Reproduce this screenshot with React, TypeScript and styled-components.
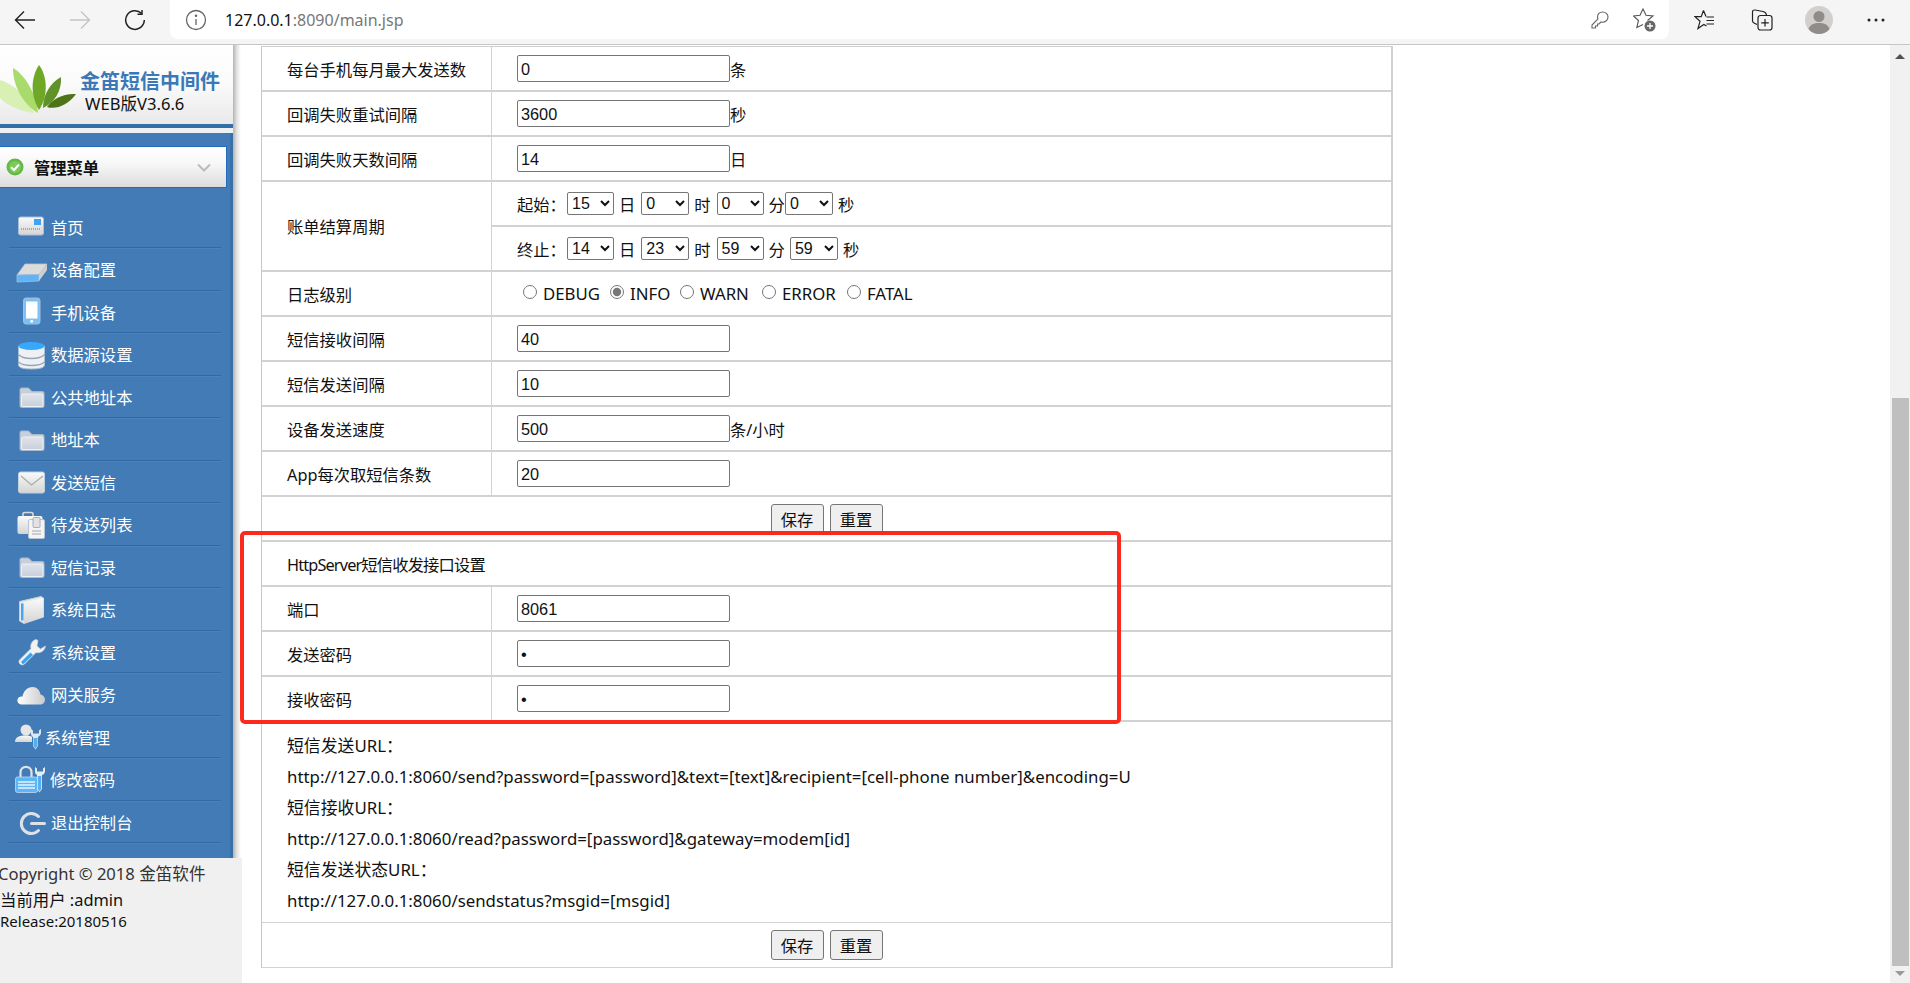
import React from "react";
import styled, { createGlobalStyle } from "styled-components";

const textFont = `"Noto Sans", "Noto Sans CJK SC", sans-serif`;
const fieldFont = `"Liberation Sans", "Noto Sans CJK SC", sans-serif`;

const GlobalStyle = createGlobalStyle`
  html, body {
    margin: 0;
    padding: 0;
    height: 100%;
    overflow: hidden;
    background: #fff;
  }
  * { box-sizing: border-box; }
`;

const Frame = styled.div`
  position: relative;
  display: flex;
  flex-direction: column;
  width: 1910px;
  height: 983px;
  overflow: hidden;
  font-family: ${textFont};
  font-size: 16.3px;
  color: #111;
`;

/* browser chrome */
const Toolbar = styled.header`
  display: flex;
  align-items: flex-start;
  flex: 0 0 45px;
  padding-right: 6px;
  background: #f5f5f5;
  border-bottom: 1px solid #c6c6c6;
`;
const NavSlot = styled.div<{ $w: number }>`
  display: flex;
  align-items: center;
  justify-content: center;
  width: ${p => p.$w}px;
  height: 40px;
  margin-right: ${p => (p.$w === 50 ? 5 : 0)}px;
`;
const UrlBar = styled.div`
  display: flex;
  align-items: center;
  flex: 1;
  height: 39px;
  margin: 0 7px 0 5px;
  padding: 0 10px 0 15px;
  background: #fff;
  border-radius: 0 0 8px 8px;
`;
const UrlText = styled.div`
  margin-left: 18px;
  flex: 1;
  font-size: 16px;
  color: #777;
  span { color: #111; }
`;
const UrlAction = styled.div<{ $gap: number }>`
  display: flex;
  margin-right: ${p => p.$gap}px;
`;

/* page */
const Page = styled.div`
  display: flex;
  flex: 1;
  min-height: 0;
`;
const Sidebar = styled.aside`
  display: flex;
  flex-direction: column;
  flex: 0 0 242px;
`;
const SideTop = styled.div`
  flex: 0 0 813px;
  padding-right: 9px;
  background: linear-gradient(90deg, #b4b4b4 233px, #e4e4e4 237px, #fff 241px);
`;
const Brand = styled.div`
  display: flex;
  height: 79px;
  background: linear-gradient(180deg, #fff 0%, #fafafa 50%, #e9e9e9 100%);
`;
const BrandText = styled.div`
  padding-top: 23px;
`;
const BrandTitle = styled.div`
  font-size: 20px;
  line-height: 27px;
  font-weight: 700;
  color: #3a79b7;
  white-space: nowrap;
`;
const BrandVersion = styled.div`
  margin: -2px 0 0 5px;
  font-size: 16.6px;
  line-height: 22px;
  color: #111;
`;
const BrandBar = styled.div`
  height: 9px;
  border-top: 4px solid #336fa7;
  background: #eef1f4;
`;
const MenuPanel = styled.nav`
  height: 725px;
  padding-top: 13px;
  background: #427bb6;
  border-right: 3px solid #3a70a8;
`;
const MenuHead = styled.div`
  display: flex;
  align-items: center;
  width: 227px;
  height: 42px;
  padding: 0 15px 0 6px;
  border: 1px solid #1f6cc0;
  border-left: 0;
  background: linear-gradient(180deg, #fff 0%, #f6f6f6 45%, #dcdcdc 100%);
`;
const MenuHeadTitle = styled.div`
  flex: 1;
  margin-left: 10px;
  font-weight: 700;
  color: #111;
`;
const MenuList = styled.ul`
  list-style: none;
  margin: 17.5px 0 0 9px;
  padding: 0;
  width: 212px;
`;
const MenuItem = styled.li`
  display: flex;
  align-items: center;
  height: 42.5px;
  border-bottom: 1px solid #2f6aa6;
  box-shadow: 0 1px 0 #4a82bb;
  color: #fff;
  white-space: nowrap;
`;
const MenuLabel = styled.span<{ $shift?: number }>`
  margin-left: ${p => p.$shift || 0}px;
  padding-top: 1px;
`;
const SideFooter = styled.div`
  flex: 1;
  padding-top: 5px;
  overflow: hidden;
  background: #f0f0f0;
  white-space: nowrap;
`;
const FootLine = styled.div<{ $size: number; $h: number; $x: number; $color: string }>`
  margin-left: ${p => p.$x}px;
  font-size: ${p => p.$size}px;
  line-height: ${p => p.$h}px;
  color: ${p => p.$color};
`;

const Main = styled.main`
  flex: 1;
  padding: 1px 0 0 19px;
  overflow: hidden;
`;
const Table = styled.table`
  width: 1132px;
  table-layout: fixed;
  border-collapse: separate;
  border-spacing: 0;
  border-top: 1px solid #d0d0d0;
  border-left: 1px solid #c8c8c8;
  border-right: 2px solid #d0d0d0;
`;
const Cell = styled.td<{ $h?: number; $thin?: boolean }>`
  height: ${p => p.$h || 45}px;
  padding: 0 0 0 25px;
  border-bottom: ${p => (p.$thin ? 1.5 : 2)}px solid #d2d2d2;
  vertical-align: middle;
  white-space: nowrap;
`;
const LabelCell = styled(Cell)`
  width: 230px;
  border-right: 1px solid #d2d2d2;
`;
const CenterCell = styled(Cell)`
  padding: 0;
  text-align: center;
`;
const SectionTitle = styled(Cell)`
  letter-spacing: -0.85px;
`;
const TextField = styled.input`
  width: 213px;
  height: 27px;
  margin: 0;
  padding: 2px 3px 0;
  border: 1px solid #767676;
  border-radius: 2px;
  font-family: ${fieldFont};
  font-size: 16.3px;
  color: #111;
  vertical-align: middle;
`;
const Suffix = styled.span`
  vertical-align: middle;
`;
const SelectLine = styled.div`
  display: flex;
  align-items: center;
`;
const SelectLabel = styled.span`
  width: 50px;
`;
const Picker = styled.select<{ $w: number }>`
  width: ${p => p.$w}px;
  height: 23px;
  padding: 0;
  border: 1px solid #767676;
  border-radius: 2px;
  background: #fff;
  font-family: ${fieldFont};
  font-size: 16px;
  color: #111;
`;
const Unit = styled.span<{ $r: number }>`
  margin: 0 ${p => p.$r}px 0 5px;
`;
const RadioLine = styled.div`
  display: flex;
  align-items: center;
  padding-left: 6px;
`;
const RadioOption = styled.label<{ $w: number }>`
  display: flex;
  align-items: center;
  width: ${p => p.$w}px;
  font-size: 16.8px;
  input {
    width: 14px;
    height: 14px;
    margin: -3px 6px 0 0;
    accent-color: #777;
  }
`;
const ActionButton = styled.button`
  width: 53px;
  height: 30px;
  margin: 0 3px;
  padding: 0;
  border: 1px solid #767676;
  border-radius: 3px;
  background: #efefef;
  font-family: ${textFont};
  font-size: 16.3px;
  color: #111;
`;
const UrlLines = styled.div`
  padding-top: 2px;
  font-size: 16.85px;
  line-height: 31px;
`;
const Highlight = styled.div`
  position: absolute;
  left: 240px;
  top: 531px;
  width: 881px;
  height: 193px;
  border: 4px solid #fb2a1c;
  border-radius: 5px;
  pointer-events: none;
`;

const ScrollTrack = styled.div`
  display: flex;
  flex-direction: column;
  align-items: center;
  flex: 0 0 21px;
  background: #f1f1f1;
  border-left: 1px solid #fff;
`;
const ScrollArrow = styled.div<{ $up?: boolean }>`
  flex: 0 0 ${p => (p.$up ? 17 : 12)}px;
  margin-top: ${p => (p.$up ? 9 : 5)}px;
  width: 0;
  border-left: 5px solid transparent;
  border-right: 5px solid transparent;
  ${p => (p.$up ? "border-bottom: 5px solid #505050; flex-basis: 5px;" : "border-top: 5px solid #9a9a9a; flex-basis: 5px; margin-bottom: 7px;")}
`;
const ScrollGap = styled.div`
  flex: 1;
`;
const ScrollThumb = styled.div`
  width: 17px;
  height: 568px;
  background: #bfbfbf;
`;

/* sidebar icons: viewBox x runs as the page x, y is centred on the row */
const IconBox = styled.svg`
  flex: 0 0 42px;
  width: 42px;
  height: 32px;
`;
const Icon = ({ children }: { children: React.ReactNode }) => (
  <IconBox viewBox="9 0 42 32">{children}</IconBox>
);
const edge = "#a9bfd6";
const SideDefs = () => (
  <svg width="0" height="0" style={{ position: "absolute" }}>
    <defs>
      <linearGradient id="sg" x1="0" y1="0" x2="0" y2="1">
        <stop offset="0" stopColor="#fafafa" />
        <stop offset="1" stopColor="#d4d4d4" />
      </linearGradient>
      <linearGradient id="sb" x1="0" y1="0" x2="0" y2="1">
        <stop offset="0" stopColor="#dfe3ea" />
        <stop offset="1" stopColor="#c9d0db" />
      </linearGradient>
      <linearGradient id="cl" x1="0" y1="0" x2="1" y2="0">
        <stop offset="0" stopColor="#fff" />
        <stop offset="1" stopColor="#c9c9c9" />
      </linearGradient>
    </defs>
  </svg>
);
const FolderShape = () => (
  <>
    <path d="M20 26V9.5Q20 8 21.5 8H28.5L32 11.5H42.5Q44 11.5 44 13V26Q44 27.5 42.5 27.5H21.5Q20 27.5 20 26Z" fill="#c6cfda" stroke="#a9b9ca" strokeWidth="1" />
    <rect x="21.5" y="14" width="21.5" height="12.5" rx="1.5" fill="url(#sb)" stroke="#eef1f5" strokeWidth="1" />
  </>
);
const icons: Record<string, React.ReactNode> = {
  home: (
    <>
      <rect x="18.5" y="7" width="25" height="18" rx="2" fill="url(#sg)" stroke={edge} />
      <rect x="34" y="9" width="7" height="6" fill="#3ea3f4" />
      <path d="M21 19H41" stroke="#a8a8a8" strokeWidth="2" strokeDasharray="1 1" />
    </>
  ),
  device: (
    <>
      <path d="M25 11H47L39 21.5L17 22Z" fill="#dcdcdc" stroke="#b9c4d0" strokeWidth=".8" />
      <path d="M17 22L39 21.5V28L17 29Z" fill="#5fb3f6" stroke="#a9bfd6" strokeWidth=".8" />
      <path d="M39 21.5L47 11V17L39 28Z" fill="#cfcfcf" />
    </>
  ),
  phone: (
    <>
      <rect x="23.5" y="3" width="16.5" height="26" rx="2.5" fill="#7cc0f4" stroke={edge} />
      <rect x="26" y="6.5" width="11.5" height="17" fill="#fff" />
      <circle cx="31.7" cy="26.3" r="1.4" fill="#fff" />
    </>
  ),
  db: (
    <>
      <path d="M18.5 8V27Q18.5 31 31.5 31T44.5 27V8Z" fill="#eef0f3" stroke={edge} />
      <ellipse cx="31.5" cy="8" rx="13" ry="4" fill="#37a8fb" />
      <path d="M18.5 16.5Q22 20.5 31.5 20.5T44.5 16.5M18.5 24Q22 27.5 31.5 27.5T44.5 24" fill="none" stroke="#9aa6b4" strokeWidth="1.3" />
    </>
  ),
  folder: <FolderShape />,
  mail: (
    <>
      <rect x="18.5" y="7" width="26" height="21" rx="2" fill="url(#sg)" stroke="#c2cfdc" />
      <path d="M21 11L31.5 20L43 11" fill="none" stroke="#acacac" strokeWidth="1.3" />
    </>
  ),
  queue: (
    <>
      <path d="M23 8V6Q23 4.5 25 4.5H31Q33 4.5 33 6V8" fill="none" stroke="#d9d9d9" strokeWidth="1.6" />
      <rect x="17.5" y="8" width="25" height="18" rx="2" fill="url(#sg)" />
      <rect x="28.5" y="11.5" width="16" height="19" rx="1.5" fill="#f4f4f4" stroke="#b9c4d0" />
      <rect x="33" y="9.5" width="7" height="10" rx="1" fill="#e2e2e2" stroke="#a0a8b2" strokeWidth=".9" />
      <path d="M32 23H41M32 26H41" stroke="#a0a8b2" />
    </>
  ),
  book: (
    <>
      <path d="M19.5 8.5L41 3.5L43.5 5V24L24 30.5L19.5 28Z" fill="#eaeaea" stroke="#c4cfdb" />
      <path d="M24 9.5L43.5 5V24L24 30.5Z" fill="url(#sg)" />
      <path d="M21 10.5H23.5V27.5H21Z" fill="#46a6f2" />
    </>
  ),
  wrench: (
    <>
      <path d="M36 4.5C32 5.5 30 9.5 31 13.5L19.5 25C18.5 26.5 19 28 20 29C21 30 23 30.5 24.5 29L36 17.5C40 18.5 44.5 16.5 45.5 11L40.5 14L37 11L38 5.5Z" fill="#f2f2f2" stroke="#c9d3de" strokeWidth=".7" />
      <path d="M21 27L30.5 17.5L33 20L23 29.5Z" fill="#39a2f2" />
    </>
  ),
  cloud: <path d="M22 26.5C18.5 26.5 17 24 17.5 21.5C18 19 20.5 18 22.5 18.5C23.5 13 27.5 9 32.5 9C37 9 40 12.5 40.5 16.5C43.5 17 45 19.5 45 21.5C45 24.5 43 26.5 40 26.5Z" fill="url(#cl)" />,
  admin: (
    <>
      <circle cx="26" cy="10" r="5.5" fill="#e6e6e6" />
      <path d="M15 22C15 17 19 15.5 26 15.5C29 15.5 31 16 32 17V22Z" fill="url(#sg)" />
      <path d="M31 9V14Q31 16 33 17V26L35.5 29.5L38 26V17Q41 15.5 41 13V9L39 10.5V13.5H33V10.5Z" fill="#dfe8f1" />
      <path d="M33.5 18H37.5V26L35.5 28.5L33.5 26Z" fill="#58aef2" />
    </>
  ),
  lock: (
    <>
      <path d="M20.5 14V9.5C20.5 6 23 3.8 26 3.8C29 3.8 31.5 6 31.5 9.5V14" fill="none" stroke="#dfe3e8" strokeWidth="2.2" />
      <rect x="15.5" y="14" width="22" height="15.5" rx="2" fill="#5cb7fa" stroke="#c4d9ec" strokeWidth=".8" />
      <path d="M18 19H35M18 22H35M18 25H35" stroke="#e8f4fd" strokeWidth="1.5" />
      <path d="M35 4V9Q35 11 37 12V26L39.5 29.5L42 26V12Q45 11 45 8V4L43 5.5V8.5H37V5.5Z" fill="#e4ebf2" />
      <path d="M37.8 13H41.2V26L39.5 28.5L37.8 26Z" fill="#58aef2" />
    </>
  ),
  logout: (
    <path d="M38.5 11.5A10 10 0 1 0 38.5 25.5M31.5 18.5H44.5" fill="none" stroke="#dde2e8" strokeWidth="3" strokeLinecap="round" />
  ),
};

const LeafLogo = () => (
  <svg width="80" height="79" viewBox="0 0 80 79">
    <path d="M-2 35C10 36 26 50 34 68C18 66 2 58 -2 50Z" fill="#d8f0b4" />
    <path d="M13 23C25 30 36 48 38 68C24 60 13 42 13 23Z" fill="#a9da6c" />
    <path d="M39 20C48 32 48 52 39 65C30 50 31 32 39 20Z" fill="#6fa827" />
    <path d="M61 32C62 46 54 58 43 63C43 50 50 38 61 32Z" fill="#5f9227" />
    <path d="M76 49C68 60 56 65 47 62C52 54 64 48 76 49Z" fill="#4d7417" />
  </svg>
);

type Entry = { key: string; label: string; shift?: number };
const menu: Entry[] = [
  { key: "home", label: "首页" },
  { key: "device", label: "设备配置" },
  { key: "phone", label: "手机设备" },
  { key: "db", label: "数据源设置" },
  { key: "folder", label: "公共地址本" },
  { key: "folder", label: "地址本" },
  { key: "mail", label: "发送短信" },
  { key: "queue", label: "待发送列表" },
  { key: "folder", label: "短信记录" },
  { key: "book", label: "系统日志" },
  { key: "wrench", label: "系统设置" },
  { key: "cloud", label: "网关服务" },
  { key: "admin", label: "系统管理", shift: -6 },
  { key: "lock", label: "修改密码", shift: -1 },
  { key: "logout", label: "退出控制台" },
];

const fieldRow = (label: string, value: string, suffix?: string, type = "text") => (
  <tr key={label}>
    <LabelCell>{label}</LabelCell>
    <Cell>
      <TextField type={type} defaultValue={value} />
      {suffix && <Suffix>{suffix}</Suffix>}
    </Cell>
  </tr>
);

const Pick = ({ v, w }: { v: string; w: number }) => (
  <Picker $w={w} defaultValue={v}>
    <option>{v}</option>
  </Picker>
);

const levels = [
  { name: "DEBUG", w: 87 },
  { name: "INFO", w: 70 },
  { name: "WARN", w: 82 },
  { name: "ERROR", w: 85 },
  { name: "FATAL", w: 70 },
];

const Buttons = () => (
  <>
    <ActionButton>保存</ActionButton>
    <ActionButton>重置</ActionButton>
  </>
);

export default function App() {
  return (
    <Frame>
      <GlobalStyle />
      <SideDefs />
      <Toolbar>
        <NavSlot $w={50}>
          <svg width="22" height="20" viewBox="0 0 22 20" fill="none" stroke="#222" strokeWidth="1.4">
            <path d="M1.5 10H21M10 1.5L1.5 10L10 18.5" />
          </svg>
        </NavSlot>
        <NavSlot $w={50}>
          <svg width="22" height="20" viewBox="0 0 22 20" fill="none" stroke="#c4c4c4" strokeWidth="1.4">
            <path d="M20.5 10H1M12 1.5L20.5 10L12 18.5" />
          </svg>
        </NavSlot>
        <NavSlot $w={50}>
          <svg width="22" height="22" viewBox="0 0 22 22" fill="none" stroke="#222" strokeWidth="1.5">
            <path d="M17.6 4.5A9.3 9.3 0 1 0 20.3 11" />
            <path d="M18 1V5.3H13.5" />
          </svg>
        </NavSlot>
        <UrlBar>
          <svg width="22" height="22" viewBox="0 0 22 22" fill="none" stroke="#666" strokeWidth="1.3">
            <circle cx="11" cy="11" r="9.5" />
            <path d="M11 10V16" />
            <circle cx="11" cy="6.8" r=".6" fill="#666" />
          </svg>
          <UrlText>
            <span>127.0.0.1</span>:8090/main.jsp
          </UrlText>
          <UrlAction $gap={23}>
            <svg width="20" height="20" viewBox="0 0 20 20" fill="none" stroke="#666" strokeWidth="1.1">
              <path d="M12.5 2C9.5 2 7.5 4.2 7.5 7C7.5 7.7 7.7 8.4 8 9L2 15V18H5.5V16H7.5V14H9L11 12C11.5 12.2 12 12.2 12.5 12.2C15.5 12.2 18 10 18 7C18 4.2 15.5 2 12.5 2Z" />
            </svg>
          </UrlAction>
          <UrlAction $gap={2}>
            <svg width="24" height="24" viewBox="0 0 24 24" fill="none">
              <path d="M14.5 12.5L20 8L13 7.3L10 1L7 7.3L.5 8L5.5 12.5L3.8 19.5L10 16.5" stroke="#555" strokeWidth="1.1" />
              <circle cx="17" cy="18" r="5.5" fill="#666" />
              <path d="M14 18H20M17 15V21" stroke="#fff" strokeWidth="1.3" />
            </svg>
          </UrlAction>
        </UrlBar>
        <NavSlot $w={57}>
          <svg width="22" height="22" viewBox="0 0 22 22" fill="none" stroke="#222" strokeWidth="1.2">
            <path d="M12.5 8H20M9.5 1.5L7.2 7.7H1L6 12.3L4 19.5L9.8 15.5L12.5 17M9.5 1.5L12 7.5M12.5 11.5H20M12.5 15H20" />
          </svg>
        </NavSlot>
        <NavSlot $w={57}>
          <svg width="22" height="22" viewBox="0 0 22 22" fill="none" stroke="#222" strokeWidth="1.2">
            <path d="M6 15.5L3 14Q1.5 13.5 1.5 11.5V3Q1.5 .8 4 1L12 2.5Q15 3 15.5 6" />
            <rect x="7" y="6.5" width="14" height="14.5" rx="2.5" />
            <path d="M14 10V17.5M10.2 13.8H17.8" />
          </svg>
        </NavSlot>
        <NavSlot $w={57}>
          <svg width="28" height="28" viewBox="0 0 28 28">
            <circle cx="14" cy="14" r="14" fill="#d2d0ce" />
            <circle cx="14" cy="10.5" r="5.5" fill="#8f8c8a" />
            <path d="M3.5 23C5 18.5 9 17 14 17C19 17 23 18.5 24.5 23C22 26.5 18 28 14 28C10 28 6 26.5 3.5 23Z" fill="#8f8c8a" />
          </svg>
        </NavSlot>
        <NavSlot $w={57}>
          <svg width="18" height="4" viewBox="0 0 18 4" fill="#222">
            <circle cx="2" cy="2" r="1.5" />
            <circle cx="9" cy="2" r="1.5" />
            <circle cx="16" cy="2" r="1.5" />
          </svg>
        </NavSlot>
      </Toolbar>

      <Page>
        <Sidebar>
          <SideTop>
            <Brand>
              <LeafLogo />
              <BrandText>
                <BrandTitle>金笛短信中间件</BrandTitle>
                <BrandVersion>WEB版V3.6.6</BrandVersion>
              </BrandText>
            </Brand>
            <BrandBar />
            <MenuPanel>
              <MenuHead>
                <svg width="18" height="18" viewBox="0 0 18 18">
                  <circle cx="9" cy="9" r="8.5" fill="#63b944" />
                  <circle cx="9" cy="9" r="6" fill="#7ccb5a" />
                  <path d="M5 9.3L8 12L13 6.5" fill="none" stroke="#fff" strokeWidth="2" />
                </svg>
                <MenuHeadTitle>管理菜单</MenuHeadTitle>
                <svg width="14" height="9" viewBox="0 0 14 9" fill="none" stroke="#bbb" strokeWidth="2">
                  <path d="M1 1.5L7 7.5L13 1.5" />
                </svg>
              </MenuHead>
              <MenuList>
                {menu.map(m => (
                  <MenuItem key={m.label}>
                    <Icon>{icons[m.key]}</Icon>
                    <MenuLabel $shift={m.shift}>{m.label}</MenuLabel>
                  </MenuItem>
                ))}
              </MenuList>
            </MenuPanel>
          </SideTop>
          <SideFooter>
            <FootLine $size={16.6} $h={22} $x={-2} $color="#333">Copyright © 2018 金笛软件</FootLine>
            <FootLine $size={16.4} $h={30} $x={0} $color="#111">当前用户 :admin</FootLine>
            <FootLine $size={15} $h={12} $x={0} $color="#111">Release:20180516</FootLine>
          </SideFooter>
        </Sidebar>

        <Main>
          <Table>
            <tbody>
              {fieldRow("每台手机每月最大发送数", "0", "条")}
              {fieldRow("回调失败重试间隔", "3600", "秒")}
              {fieldRow("回调失败天数间隔", "14", "日")}
              <tr>
                <LabelCell rowSpan={2}>账单结算周期</LabelCell>
                <Cell>
                  <SelectLine>
                    <SelectLabel>起始：</SelectLabel>
                    <Pick v="15" w={47} />
                    <Unit $r={6}>日</Unit>
                    <Pick v="0" w={48} />
                    <Unit $r={6}>时</Unit>
                    <Pick v="0" w={47} />
                    <Unit $r={0}>分</Unit>
                    <Pick v="0" w={48} />
                    <Unit $r={0}>秒</Unit>
                  </SelectLine>
                </Cell>
              </tr>
              <tr>
                <Cell>
                  <SelectLine>
                    <SelectLabel>终止：</SelectLabel>
                    <Pick v="14" w={47} />
                    <Unit $r={6}>日</Unit>
                    <Pick v="23" w={48} />
                    <Unit $r={6}>时</Unit>
                    <Pick v="59" w={47} />
                    <Unit $r={5}>分</Unit>
                    <Pick v="59" w={48} />
                    <Unit $r={0}>秒</Unit>
                  </SelectLine>
                </Cell>
              </tr>
              <tr>
                <LabelCell>日志级别</LabelCell>
                <Cell>
                  <RadioLine>
                    {levels.map(l => (
                      <RadioOption key={l.name} $w={l.w}>
                        <input type="radio" name="level" defaultChecked={l.name === "INFO"} />
                        {l.name}
                      </RadioOption>
                    ))}
                  </RadioLine>
                </Cell>
              </tr>
              {fieldRow("短信接收间隔", "40")}
              {fieldRow("短信发送间隔", "10")}
              {fieldRow("设备发送速度", "500", "条/小时")}
              {fieldRow("App每次取短信条数", "20")}
              <tr>
                <CenterCell colSpan={2}><Buttons /></CenterCell>
              </tr>
              <tr>
                <SectionTitle colSpan={2}>HttpServer短信收发接口设置</SectionTitle>
              </tr>
              {fieldRow("端口", "8061")}
              {fieldRow("发送密码", "1", undefined, "password")}
              {fieldRow("接收密码", "1", undefined, "password")}
              <tr>
                <Cell colSpan={2} $h={201} $thin>
                  <UrlLines>
                    <div>短信发送URL：</div>
                    <div>http://127.0.0.1:8060/send?password=[password]&amp;text=[text]&amp;recipient=[cell-phone number]&amp;encoding=U</div>
                    <div>短信接收URL：</div>
                    <div>http://127.0.0.1:8060/read?password=[password]&amp;gateway=modem[id]</div>
                    <div>短信发送状态URL：</div>
                    <div>http://127.0.0.1:8060/sendstatus?msgid=[msgid]</div>
                  </UrlLines>
                </Cell>
              </tr>
              <tr>
                <CenterCell colSpan={2} $thin><Buttons /></CenterCell>
              </tr>
            </tbody>
          </Table>
        </Main>

        <ScrollTrack>
          <ScrollArrow $up />
          <ScrollGap />
          <ScrollThumb />
          <ScrollArrow />
        </ScrollTrack>
      </Page>
      <Highlight />
    </Frame>
  );
}
